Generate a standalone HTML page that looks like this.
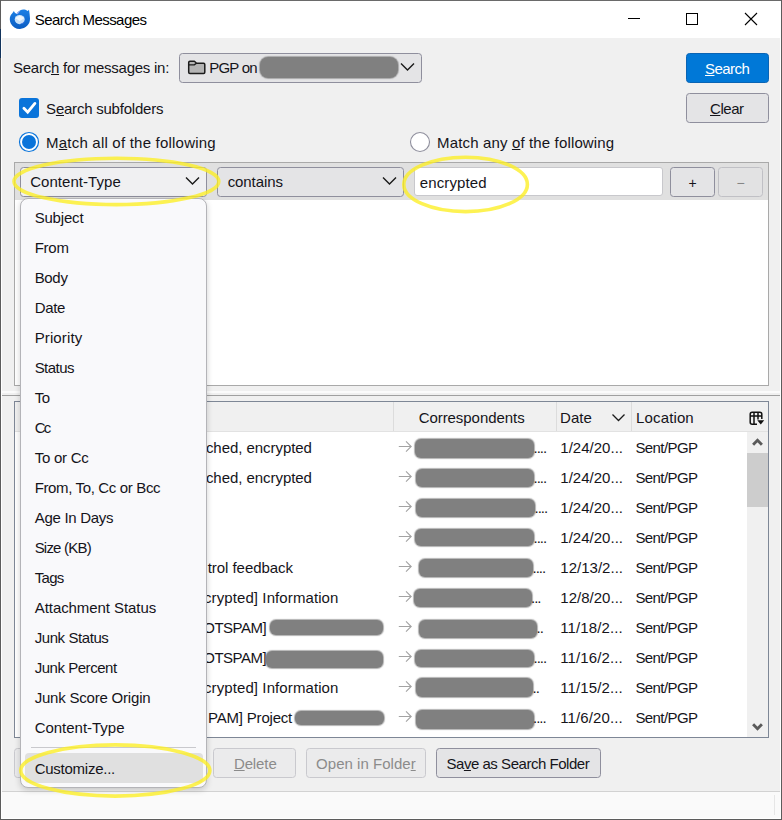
<!DOCTYPE html>
<html><head><meta charset="utf-8"><title>Search Messages</title>
<style>
html,body{margin:0;padding:0;}
body{width:782px;height:820px;overflow:hidden;background:#f0f0f0;font-family:"Liberation Sans",sans-serif;font-size:15px;color:#15141a;position:relative;}
.abs{position:absolute;}
.t{position:absolute;white-space:nowrap;line-height:20px;height:20px;}
u{text-decoration-thickness:1px;text-underline-offset:1px;}
.btn{position:absolute;box-sizing:border-box;border:1px solid #8f8f9d;border-radius:3.5px;background:#e4e4e6;}
.btn.dis{border-color:#c9c9ce;background:#ebebec;color:#8b8b8b;}
.blob{position:absolute;background:#808080;border-radius:6px;box-shadow:0 0 1px 1px rgba(128,128,128,.6);}
.mi{position:absolute;left:15px;white-space:nowrap;line-height:20px;height:20px;}
.row{position:absolute;left:0;width:732px;height:30px;}
</style></head><body>

<!-- title bar -->
<div class="abs" id="titlebar" style="left:0;top:0;width:782px;height:38px;background:#fff;"></div>
<svg class="abs" style="left:4px;top:4px" width="32" height="32" viewBox="0 0 32 32">
  <defs><linearGradient id="tbg" x1="0" y1="0" x2="0" y2="1"><stop offset="0" stop-color="#1b80e6"/><stop offset="1" stop-color="#0a5cc2"/></linearGradient></defs>
  <path d="M9.9 7.1 C9.1 8.6 7.6 9.9 6.6 11.6 C5.4 13.8 5.6 17 6.8 19.4 C8.6 23 12 25 16 24.9 C21.6 24.8 26.2 20.6 26 14.6 C25.9 11.6 25.4 8.6 25 5.8 C24.6 6.5 24.1 6.8 23.4 6.9 C21.5 5.3 18.6 5 16.3 6.2 C14.9 6.9 13.4 8.2 12.4 9.9 C11.4 9.4 10.4 8.4 9.9 7.1 Z" fill="url(#tbg)"/>
  <path d="M12.6 9.6 C13.6 8.2 15 7 16.6 6.4 C15.6 7.4 14.4 8.8 13.8 10.2 Z" fill="#c9b8f2" opacity=".8"/>
  <ellipse cx="15.7" cy="15.6" rx="5" ry="4.6" fill="#c6e0f9"/>
  <path d="M11 14 L15.8 11.4 L20.6 14 L15.8 17 Z" fill="#eef6fe"/>
  <path d="M16 19.5 C18 19.5 20 18.3 20.6 16.7 C20.9 19.2 18.6 20.6 16 19.5 Z" fill="#3a76e0"/>
</svg>
<div class="t" id="title" style="left:34.82px;letter-spacing:-0.566px;top:10px;color:#000;">Search Messages</div>
<div class="abs" style="left:628px;top:18px;width:12px;height:1px;background:#000;"></div>
<div class="abs" style="left:686px;top:13px;width:10px;height:10px;border:1px solid #000;"></div>
<svg class="abs" style="left:744px;top:12px" width="14" height="14" viewBox="0 0 14 14"><path d="M1 1 L13 13 M13 1 L1 13" stroke="#000" stroke-width="1.1" fill="none"/></svg>

<!-- search in row -->
<div class="t" id="lblSearchIn" style="left:13px;letter-spacing:-0.245px;top:58px;">Searc<u>h</u> for messages in:</div>
<div class="btn" style="left:179px;top:53px;width:243px;height:30px;"></div>
<svg class="abs" style="left:187px;top:59px" width="20" height="16" viewBox="0 0 20 16"><path d="M1.7 3.4 Q1.7 2.2 2.9 2.2 L7.4 2.2 L9.6 4.2 L16.6 4.2 Q17.8 4.2 17.8 5.4 L17.8 13.2 Q17.8 14.4 16.6 14.4 L2.9 14.4 Q1.7 14.4 1.7 13.2 Z" fill="#b4b4b4" stroke="#1c1c1c" stroke-width="1.5" stroke-linejoin="round"/><path d="M1.7 5.9 L7.3 5.9 L9.4 4.2" fill="none" stroke="#1c1c1c" stroke-width="1.4"/></svg>
<div class="t" id="pgpon" style="left:209.18px;letter-spacing:-0.756px;top:58px;">PGP on</div>
<div class="blob" style="left:260px;top:57px;width:138px;height:21px;border-radius:8px;"></div>
<svg class="abs" style="left:399px;top:61px" width="17" height="12" viewBox="0 0 17 12"><path d="M2 2.5 L8.5 9 L15 2.5" stroke="#1a1a1a" stroke-width="1.4" fill="none"/></svg>

<div class="btn" style="left:686px;top:53px;width:83px;height:30px;background:#0078d7;border-color:#0a64b4;color:#fff;"></div>
<div class="t" id="bSearch" style="left:705px;letter-spacing:-0.54px;top:59px;color:#fff;"><u>S</u>earch</div>
<div class="btn" style="left:686px;top:93px;width:83px;height:30px;"></div>
<div class="t" id="bClear" style="left:710px;letter-spacing:-0.45px;top:99px;"><u>C</u>lear</div>

<!-- checkbox -->
<div class="abs" style="left:19px;top:98px;width:20px;height:20px;background:#0a74da;border-radius:3px;"></div>
<svg class="abs" style="left:19px;top:98px" width="20" height="20" viewBox="0 0 20 20"><path d="M4.9 10.2 L8.7 14.2 L15.9 5.4" stroke="#fff" stroke-width="2.8" stroke-linecap="round" fill="none"/></svg>
<div class="t" id="lblSub" style="left:46.1px;letter-spacing:-0.225px;top:99px;">S<u>e</u>arch subfolders</div>

<!-- radios -->
<svg class="abs" style="left:18px;top:131px" width="22" height="22" viewBox="0 0 22 22"><circle cx="11" cy="11" r="9.5" fill="#fff" stroke="#0a74da" stroke-width="1.2"/><circle cx="11" cy="11" r="7" fill="#0a74da"/></svg>
<div class="t" id="lblAll" style="left:46px;letter-spacing:0.216px;top:133px;">M<u>a</u>tch all of the following</div>
<svg class="abs" style="left:409px;top:131px" width="22" height="22" viewBox="0 0 22 22"><circle cx="11" cy="11" r="9.5" fill="#fff" stroke="#8f8f9d" stroke-width="1.1"/></svg>
<div class="t" id="lblAny" style="left:437.1px;letter-spacing:0.144px;top:133px;">Match any <u>o</u>f the following</div>

<!-- criteria listbox -->
<div class="abs" style="left:14px;top:162px;width:755px;height:224px;box-sizing:border-box;border:1px solid #a9a9a9;background:#fff;"></div>
<div class="abs" style="left:15px;top:163px;width:753px;height:37px;background:#e0e0e0;"></div>
<div class="btn" style="left:20px;top:167px;width:187px;height:30px;background:#f0f0f2;"></div>
<div class="t" id="ddCT" style="left:30.18px;letter-spacing:0.049px;top:172px;">Content-Type</div>
<svg class="abs" style="left:184px;top:175px" width="17" height="12" viewBox="0 0 17 12"><path d="M2 2.5 L8.5 9 L15 2.5" stroke="#1a1a1a" stroke-width="1.4" fill="none"/></svg>
<div class="btn" style="left:217px;top:167px;width:187px;height:30px;"></div>
<div class="t" id="ddContains" style="left:227.64px;letter-spacing:-0.077px;top:172px;">contains</div>
<svg class="abs" style="left:381px;top:175px" width="17" height="12" viewBox="0 0 17 12"><path d="M2 2.5 L8.5 9 L15 2.5" stroke="#1a1a1a" stroke-width="1.4" fill="none"/></svg>
<div class="abs" style="left:414px;top:167px;width:249px;height:29px;box-sizing:border-box;border:1px solid #c8c8cc;border-radius:3px;background:#fff;"></div>
<div class="t" id="inpEnc" style="left:419.82px;letter-spacing:0.113px;top:173px;">encrypted</div>
<div class="btn" style="left:670px;top:167px;width:45px;height:30px;"></div>
<div class="t" style="left:670px;top:173px;width:45px;text-align:center;font-size:14px;">+</div>
<div class="btn dis" style="left:718px;top:167px;width:45px;height:30px;background:#e2e2e3;border-color:#c0c0c5;"></div>
<div class="t" style="left:718px;top:173px;width:45px;text-align:center;font-size:14px;color:#858585;">−</div>

<!-- splitter -->
<div class="abs" style="left:1px;top:391px;width:780px;height:2px;background:#fbfbfb;"></div>
<div class="abs" style="left:1px;top:395px;width:780px;height:1px;background:#a0a0a0;"></div>

<!-- results table -->
<div class="abs" id="tbl" style="left:14px;top:401px;width:755px;height:337px;box-sizing:border-box;border:1px solid #7e8796;background:#fff;overflow:hidden;">
  <div class="abs" style="left:0;top:0;width:753px;height:29px;background:#f0f0f0;border-bottom:1px solid #e2e2e2;"></div>
  <div class="abs" style="left:378px;top:0;width:1px;height:29px;background:#dcdcdc;"></div>
  <div class="abs" style="left:541px;top:0;width:1px;height:29px;background:#dcdcdc;"></div>
  <div class="abs" style="left:616px;top:0;width:1px;height:29px;background:#dcdcdc;"></div>
  <div class="t" style="left:40px;top:6px;">Subject</div>
  <div class="t" id="hCorr" style="left:403.64px;letter-spacing:-0.055px;top:6px;">Correspondents</div>
  <div class="t" id="hDate" style="left:545.1px;letter-spacing:0px;top:6px;">Date</div>
  <svg class="abs" style="left:595px;top:10px" width="17" height="12" viewBox="0 0 17 12"><path d="M2.5 2.5 L8.5 8.5 L14.5 2.5" stroke="#1a1a1a" stroke-width="1.3" fill="none"/></svg>
  <div class="t" id="hLoc" style="left:621.1px;letter-spacing:0.129px;top:6px;">Location</div>
  <svg class="abs" style="left:734px;top:9px" width="16" height="15" viewBox="0 0 16 15"><path d="M1.2 3.2 Q1.2 1.2 3.2 1.2 L10.8 1.2 Q12.8 1.2 12.8 3.2 L12.8 8 M1.2 3.2 L1.2 11.3 Q1.2 13.3 3.2 13.3 L8 13.3 M1.2 5 L12.8 5 M5 1.2 L5 13.3 M9 1.2 L9 8.5" stroke="#111" stroke-width="1.5" fill="none"/><path d="M8.3 9.2 L15.2 9.2 L11.75 13.6 Z" fill="#111"/></svg>
  <!-- scrollbar -->
  <div class="abs" style="left:732px;top:30px;width:21px;height:305px;background:#f0f0f0;"></div>
  <div class="abs" style="left:732px;top:51px;width:21px;height:54px;background:#cdcdcd;"></div>
  <svg class="abs" style="left:736px;top:34px" width="14" height="12" viewBox="0 0 14 12"><path d="M2.1 8.8 L6.5 4.2 L10.9 8.8" stroke="#5a5a5a" stroke-width="2.8" fill="none"/></svg>
  <svg class="abs" style="left:736px;top:319px" width="14" height="12" viewBox="0 0 14 12"><path d="M2.1 3.2 L6.5 7.8 L10.9 3.2" stroke="#5a5a5a" stroke-width="2.8" fill="none"/></svg>
  <div class="t" id="s0" style="left:190.92px;letter-spacing:-0.05px;top:36px;">ched, encrypted</div>
  <svg class="abs" style="left:383px;top:38px" width="14" height="13" viewBox="0 0 14 13"><path d="M0.8 6.5 L13 6.5 M8 1.3 L13.2 6.5 L8 11.7" stroke="#a3a3a3" stroke-width="1.1" fill="none"/></svg>
  <div class="blob" style="left:399.5px;top:37px;width:119.5px;height:19px;"></div>
  <div class="t" id="d0" style="left:518.5px;letter-spacing:-1px;top:36px;">....</div>
  <div class="t" id="dt0" style="left:545.28px;letter-spacing:0.02px;top:36px;">1/24/20...</div>
  <div class="t" id="l0" style="left:620.46px;letter-spacing:-0.591px;top:36px;">Sent/PGP</div>
  <div class="t" id="s1" style="left:190.92px;letter-spacing:-0.05px;top:66px;">ched, encrypted</div>
  <svg class="abs" style="left:383px;top:68px" width="14" height="13" viewBox="0 0 14 13"><path d="M0.8 6.5 L13 6.5 M8 1.3 L13.2 6.5 L8 11.7" stroke="#a3a3a3" stroke-width="1.1" fill="none"/></svg>
  <div class="blob" style="left:401px;top:66.5px;width:118px;height:18.5px;"></div>
  <div class="t" id="d1" style="left:518.5px;letter-spacing:-1px;top:66px;">....</div>
  <div class="t" id="dt1" style="left:545.28px;letter-spacing:0.02px;top:66px;">1/24/20...</div>
  <div class="t" id="l1" style="left:620.46px;letter-spacing:-0.591px;top:66px;">Sent/PGP</div>
  <svg class="abs" style="left:383px;top:98px" width="14" height="13" viewBox="0 0 14 13"><path d="M0.8 6.5 L13 6.5 M8 1.3 L13.2 6.5 L8 11.7" stroke="#a3a3a3" stroke-width="1.1" fill="none"/></svg>
  <div class="blob" style="left:401px;top:96.5px;width:119px;height:18.5px;"></div>
  <div class="t" id="d2" style="left:519.5px;letter-spacing:-1px;top:96px;">....</div>
  <div class="t" id="dt2" style="left:545.28px;letter-spacing:0.02px;top:96px;">1/24/20...</div>
  <div class="t" id="l2" style="left:620.46px;letter-spacing:-0.591px;top:96px;">Sent/PGP</div>
  <svg class="abs" style="left:383px;top:128px" width="14" height="13" viewBox="0 0 14 13"><path d="M0.8 6.5 L13 6.5 M8 1.3 L13.2 6.5 L8 11.7" stroke="#a3a3a3" stroke-width="1.1" fill="none"/></svg>
  <div class="blob" style="left:400px;top:127px;width:119px;height:16.5px;"></div>
  <div class="t" id="d3" style="left:518.5px;letter-spacing:-1px;top:126px;">....</div>
  <div class="t" id="dt3" style="left:545.28px;letter-spacing:0.02px;top:126px;">1/24/20...</div>
  <div class="t" id="l3" style="left:620.46px;letter-spacing:-0.591px;top:126px;">Sent/PGP</div>
  <div class="t" id="s4" style="left:192.72px;letter-spacing:-0.05px;top:156px;">trol feedback</div>
  <svg class="abs" style="left:383px;top:158px" width="14" height="13" viewBox="0 0 14 13"><path d="M0.8 6.5 L13 6.5 M8 1.3 L13.2 6.5 L8 11.7" stroke="#a3a3a3" stroke-width="1.1" fill="none"/></svg>
  <div class="blob" style="left:404px;top:157px;width:114px;height:18px;"></div>
  <div class="t" id="d4" style="left:517.5px;letter-spacing:-1px;top:156px;">....</div>
  <div class="t" id="dt4" style="left:545.28px;letter-spacing:0.02px;top:156px;">12/13/2...</div>
  <div class="t" id="l4" style="left:620.46px;letter-spacing:-0.591px;top:156px;">Sent/PGP</div>
  <div class="t" id="s5" style="left:188.94px;letter-spacing:0.1px;top:186px;">crypted] Information</div>
  <svg class="abs" style="left:383px;top:188px" width="14" height="13" viewBox="0 0 14 13"><path d="M0.8 6.5 L13 6.5 M8 1.3 L13.2 6.5 L8 11.7" stroke="#a3a3a3" stroke-width="1.1" fill="none"/></svg>
  <div class="blob" style="left:398.5px;top:186.5px;width:118.0px;height:18.5px;"></div>
  <div class="t" id="d5" style="left:516px;letter-spacing:-1px;top:186px;">...</div>
  <div class="t" id="dt5" style="left:545.28px;letter-spacing:0.02px;top:186px;">12/8/20...</div>
  <div class="t" id="l5" style="left:620.46px;letter-spacing:-0.591px;top:186px;">Sent/PGP</div>
  <div class="t" id="s6" style="left:188.22px;letter-spacing:-0.5px;top:216px;">OTSPAM]</div>
  <div class="blob" style="left:255px;top:217.5px;width:113px;height:15.5px;"></div>
  <svg class="abs" style="left:383px;top:218px" width="14" height="13" viewBox="0 0 14 13"><path d="M0.8 6.5 L13 6.5 M8 1.3 L13.2 6.5 L8 11.7" stroke="#a3a3a3" stroke-width="1.1" fill="none"/></svg>
  <div class="blob" style="left:404px;top:218px;width:118px;height:17.5px;"></div>
  <div class="t" id="d6" style="left:521.5px;letter-spacing:-1px;top:216px;">..</div>
  <div class="t" id="dt6" style="left:545.28px;letter-spacing:0.12px;top:216px;">11/18/2...</div>
  <div class="t" id="l6" style="left:620.46px;letter-spacing:-0.591px;top:216px;">Sent/PGP</div>
  <div class="t" id="s7" style="left:188.22px;letter-spacing:-0.5px;top:246px;">OTSPAM]</div>
  <div class="blob" style="left:251px;top:249px;width:117px;height:17px;"></div>
  <svg class="abs" style="left:383px;top:248px" width="14" height="13" viewBox="0 0 14 13"><path d="M0.8 6.5 L13 6.5 M8 1.3 L13.2 6.5 L8 11.7" stroke="#a3a3a3" stroke-width="1.1" fill="none"/></svg>
  <div class="blob" style="left:400px;top:247.5px;width:119px;height:17.5px;"></div>
  <div class="t" id="d7" style="left:518.5px;letter-spacing:-1px;top:246px;">....</div>
  <div class="t" id="dt7" style="left:545.28px;letter-spacing:0.12px;top:246px;">11/16/2...</div>
  <div class="t" id="l7" style="left:620.46px;letter-spacing:-0.591px;top:246px;">Sent/PGP</div>
  <div class="t" id="s8" style="left:188.94px;letter-spacing:0.1px;top:276px;">crypted] Information</div>
  <svg class="abs" style="left:383px;top:278px" width="14" height="13" viewBox="0 0 14 13"><path d="M0.8 6.5 L13 6.5 M8 1.3 L13.2 6.5 L8 11.7" stroke="#a3a3a3" stroke-width="1.1" fill="none"/></svg>
  <div class="blob" style="left:401px;top:276px;width:117px;height:18.5px;"></div>
  <div class="t" id="d8" style="left:517.5px;letter-spacing:-1px;top:276px;">..</div>
  <div class="t" id="dt8" style="left:545.28px;letter-spacing:0.12px;top:276px;">11/15/2...</div>
  <div class="t" id="l8" style="left:620.46px;letter-spacing:-0.591px;top:276px;">Sent/PGP</div>
  <div class="t" id="s9" style="left:193.08px;letter-spacing:-0.2px;top:306px;">PAM] Project</div>
  <div class="blob" style="left:280px;top:309px;width:89px;height:14px;"></div>
  <svg class="abs" style="left:383px;top:308px" width="14" height="13" viewBox="0 0 14 13"><path d="M0.8 6.5 L13 6.5 M8 1.3 L13.2 6.5 L8 11.7" stroke="#a3a3a3" stroke-width="1.1" fill="none"/></svg>
  <div class="blob" style="left:401px;top:307.5px;width:117.5px;height:19.0px;"></div>
  <div class="t" id="d9" style="left:518px;letter-spacing:-1px;top:306px;">....</div>
  <div class="t" id="dt9" style="left:545.28px;letter-spacing:0.12px;top:306px;">11/6/20...</div>
  <div class="t" id="l9" style="left:620.46px;letter-spacing:-0.591px;top:306px;">Sent/PGP</div>
</div>

<!-- bottom buttons -->
<div class="btn dis" style="left:14px;top:748px;width:80px;height:30px;"></div>
<div class="t" style="left:35px;top:754px;color:#8b8b8b;"><u>O</u>pen</div>
<div class="btn dis" style="left:213px;top:748px;width:83px;height:30px;"></div>
<div class="t" id="bDel" style="left:233.9px;letter-spacing:-0.108px;top:754px;color:#8b8b8b;"><u>D</u>elete</div>
<div class="btn dis" style="left:306px;top:748px;width:120px;height:30px;"></div>
<div class="t" id="bOpen" style="left:316.1px;letter-spacing:0.028px;top:754px;color:#8b8b8b;">Open in Folde<u>r</u></div>
<div class="btn" style="left:436px;top:748px;width:165px;height:30px;"></div>
<div class="t" id="bSave" style="left:446.46px;letter-spacing:-0.468px;top:754px;">Sa<u>v</u>e as Search Folder</div>

<!-- status bar -->
<div class="abs" style="left:1px;top:791px;width:780px;height:28px;background:#fafafa;border-top:1px solid #d2d2d2;box-sizing:border-box;"></div>
<div class="abs" style="left:774px;top:795px;width:1px;height:20px;background:#e6e6e6;"></div>

<!-- popup menu -->
<div class="abs" id="popup" style="left:20px;top:198px;width:187px;height:590px;box-sizing:border-box;border:1px solid #b4b4b8;border-radius:8px;background:#f9f9fb;box-shadow:0 2px 6px rgba(0,0,0,.18);">
<div class="mi" id="m0" style="left:13.64px;letter-spacing:-0.18px;top:9px;">Subject</div>
<div class="mi" id="m1" style="left:13.64px;letter-spacing:-0.24px;top:39px;">From</div>
<div class="mi" id="m2" style="left:13.64px;letter-spacing:-0.3px;top:69px;">Body</div>
<div class="mi" id="m3" style="left:13.64px;letter-spacing:-0.3px;top:99px;">Date</div>
<div class="mi" id="m4" style="left:13.64px;letter-spacing:0.129px;top:129px;">Priority</div>
<div class="mi" id="m5" style="left:13.64px;letter-spacing:-0.54px;top:159px;">Status</div>
<div class="mi" id="m6" style="left:13.75px;letter-spacing:-0.5px;top:189px;">To</div>
<div class="mi" id="m7" style="left:13.64px;letter-spacing:-1.8px;top:219px;">Cc</div>
<div class="mi" id="m8" style="left:13.75px;letter-spacing:-0.25px;top:249px;">To or Cc</div>
<div class="mi" id="m9" style="left:13.64px;letter-spacing:-0.35px;top:279px;">From, To, Cc or Bcc</div>
<div class="mi" id="m10" style="left:13.75px;letter-spacing:-0.3px;top:309px;">Age In Days</div>
<div class="mi" id="m11" style="left:13.64px;letter-spacing:-0.788px;top:339px;">Size (KB)</div>
<div class="mi" id="m12" style="left:13.75px;letter-spacing:-0.7px;top:369px;">Tags</div>
<div class="mi" id="m13" style="left:13.75px;letter-spacing:-0.07px;top:399px;">Attachment Status</div>
<div class="mi" id="m14" style="left:13.64px;letter-spacing:-0.414px;top:429px;">Junk Status</div>
<div class="mi" id="m15" style="left:13.64px;letter-spacing:-0.458px;top:459px;">Junk Percent</div>
<div class="mi" id="m16" style="left:13.64px;letter-spacing:-0.202px;top:489px;">Junk Score Origin</div>
<div class="mi" id="m17" style="left:13.64px;letter-spacing:-0.016px;top:519px;">Content-Type</div>
<div class="abs" style="left:10px;top:548px;width:165px;height:1px;background:#c9c9cd;"></div>
<div class="abs" style="left:4px;top:554px;width:178px;height:30px;background:#e0e0e0;border-radius:4px;"></div>
<div class="mi" id="m18" style="left:13.64px;letter-spacing:-0.245px;top:560px;">Customize...</div>
</div>

<!-- window frame -->
<div class="abs" style="left:1px;top:38px;width:1px;height:781px;background:#fff;"></div>
<div class="abs" style="left:780px;top:38px;width:1px;height:781px;background:#fff;"></div>
<div class="abs" style="left:1px;top:818px;width:780px;height:1px;background:#fff;"></div>
<div class="abs" style="left:0;top:0;width:782px;height:1px;background:#6a6a6a;"></div>
<div class="abs" style="left:0;top:0;width:1px;height:820px;background:#5c5c5c;"></div>
<div class="abs" style="left:0;top:29px;width:1px;height:29px;background:#12335c;"></div>
<div class="abs" style="left:781px;top:0;width:1px;height:820px;background:#5c5c5c;"></div>
<div class="abs" style="left:0;top:819px;width:782px;height:1px;background:#5c5c5c;"></div>

<!-- yellow highlights -->
<svg class="abs" style="left:0;top:0;pointer-events:none" width="782" height="820" viewBox="0 0 782 820">
  <g fill="none" stroke="#fdee22" stroke-width="3.6" opacity=".78">
    <ellipse cx="116.4" cy="181.4" rx="102.4" ry="23.2"/>
    <ellipse cx="465.6" cy="184.4" rx="61.8" ry="27.2"/>
    <ellipse cx="115.3" cy="770.5" rx="94.6" ry="25.6"/>
  </g>
</svg>
</body></html>
